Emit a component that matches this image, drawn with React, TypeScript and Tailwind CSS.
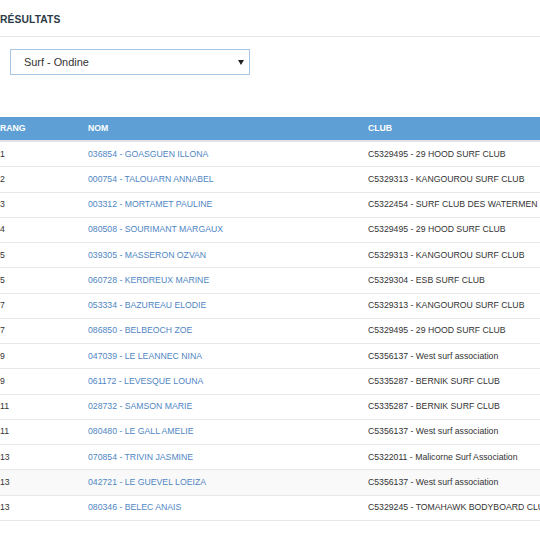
import React from 'react';

const results = [
  { rang: '1', nom: '036854 - GOASGUEN ILLONA', club: 'C5329495 - 29 HOOD SURF CLUB' },
  { rang: '2', nom: '000754 - TALOUARN ANNABEL', club: 'C5329313 - KANGOUROU SURF CLUB' },
  { rang: '3', nom: '003312 - MORTAMET PAULINE', club: 'C5322454 - SURF CLUB DES WATERMEN' },
  { rang: '4', nom: '080508 - SOURIMANT MARGAUX', club: 'C5329495 - 29 HOOD SURF CLUB' },
  { rang: '5', nom: '039305 - MASSERON OZVAN', club: 'C5329313 - KANGOUROU SURF CLUB' },
  { rang: '5', nom: '060728 - KERDREUX MARINE', club: 'C5329304 - ESB SURF CLUB' },
  { rang: '7', nom: '053334 - BAZUREAU ELODIE', club: 'C5329313 - KANGOUROU SURF CLUB' },
  { rang: '7', nom: '086850 - BELBEOCH ZOE', club: 'C5329495 - 29 HOOD SURF CLUB' },
  { rang: '9', nom: '047039 - LE LEANNEC NINA', club: 'C5356137 - West surf association' },
  { rang: '9', nom: '061172 - LEVESQUE LOUNA', club: 'C5335287 - BERNIK SURF CLUB' },
  { rang: '11', nom: '028732 - SAMSON MARIE', club: 'C5335287 - BERNIK SURF CLUB' },
  { rang: '11', nom: '080480 - LE GALL AMELIE', club: 'C5356137 - West surf association' },
  { rang: '13', nom: '070854 - TRIVIN JASMINE', club: 'C5322011 - Malicorne Surf Association' },
  { rang: '13', nom: '042721 - LE GUEVEL LOEIZA', club: 'C5356137 - West surf association', hover: true },
  { rang: '13', nom: '080346 - BELEC ANAIS', club: 'C5329245 - TOMAHAWK BODYBOARD CLUB' },
];

const App = () => {
  return (
    <div className="w-[540px] h-[540px] overflow-hidden bg-white text-[#333] font-['Liberation_Sans',Arial,sans-serif]">
      {/* Titre */}
      <div className="h-[37px] flex items-center border-b border-[#e6e6e6] pt-[4px]">
        <h2 className="text-[10.3px] font-bold text-[#2d3b48] tracking-[0.1px]">RÉSULTATS</h2>
      </div>

      {/* Sélection épreuve */}
      <div className="pt-[12px] pl-[10px]">
        <div className="w-[240px] h-[26px] border border-[#a8c7e7] flex items-center justify-between pl-[13px] pr-[5px]">
          <span className="text-[10.9px] text-[#333]">Surf - Ondine</span>
          <svg width="6" height="5" viewBox="0 0 6 5">
            <path d="M0 0 L6 0 L3 5 Z" fill="#222" />
          </svg>
        </div>
      </div>

      {/* Tableau */}
      <div className="mt-[42px] w-[640px] text-[8.7px]">
        <div className="flex h-[25px] bg-[#5e9fd6] border-b-2 border-[#dfe3e8] items-center font-bold text-white">
          <div className="w-[88px]">RANG</div>
          <div className="w-[280px]">NOM</div>
          <div className="flex-1">CLUB</div>
        </div>
        {results.map((r, i) => (
          <div
            key={i}
            className={`flex h-[25.25px] items-center border-b border-[#e8e8e8] ${r.hover ? 'bg-[#f9f9f9]' : ''}`}
          >
            <div className="w-[88px]">{r.rang}</div>
            <div className="w-[280px] text-[#4f86c3]">{r.nom}</div>
            <div className="flex-1 whitespace-nowrap">{r.club}</div>
          </div>
        ))}
      </div>
    </div>
  );
};

export default App;
